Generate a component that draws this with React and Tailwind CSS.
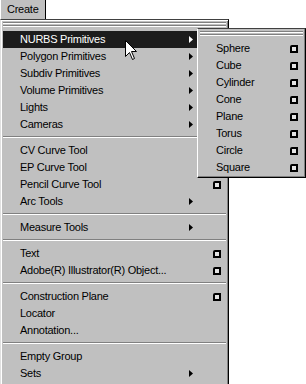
import React from 'react';

const mainItems = [
  { label: 'NURBS Primitives', sub: true, active: true },
  { label: 'Polygon Primitives', sub: true },
  { label: 'Subdiv Primitives', sub: true },
  { label: 'Volume Primitives', sub: true },
  { label: 'Lights', sub: true },
  { label: 'Cameras', sub: true },
  'sep',
  { label: 'CV Curve Tool' },
  { label: 'EP Curve Tool' },
  { label: 'Pencil Curve Tool', opt: true },
  { label: 'Arc Tools', sub: true },
  'sep',
  { label: 'Measure Tools', sub: true },
  'sep',
  { label: 'Text', opt: true },
  { label: 'Adobe(R) Illustrator(R) Object...', opt: true },
  'sep',
  { label: 'Construction Plane', opt: true },
  { label: 'Locator' },
  { label: 'Annotation...' },
  'sep',
  { label: 'Empty Group' },
  { label: 'Sets', sub: true },
];

const nurbs = ['Sphere', 'Cube', 'Cylinder', 'Cone', 'Plane', 'Torus', 'Circle', 'Square'];

function OptBox() {
  return <span className="block w-[8px] h-[8px] border-2 border-black rounded-tl-[2px] bg-[#e4e4e4]" />;
}

function Arrow({ white }) {
  return (
    <svg width="4" height="7" viewBox="0 0 4 7" className="block">
      <polygon points="0,0 4,3.5 0,7" fill={white ? '#fff' : '#000'} />
    </svg>
  );
}

function TearOff() {
  return (
    <div className="h-[11px] mx-[2px] pt-[2px]">
      <div className="border-t border-t-[#808080] border-b border-b-white" />
      <div className="h-[1px]" />
      <div className="border-t border-t-[#808080] border-b border-b-white" />
    </div>
  );
}

function Separator() {
  return (
    <div className="h-[9px] mx-[2px] pt-[3px]">
      <div className="border-t border-t-[#808080] border-b border-b-white" />
    </div>
  );
}

function Row({ item }) {
  return (
    <div
      className={`flex items-center h-[17px] mx-[2px] pl-[17px] pr-[5px] ${
        item.active ? 'bg-[#1c1c1c] text-white' : 'text-black'
      }`}
    >
      <span className="flex-1 whitespace-nowrap">{item.label}</span>
      <span className="w-[24px]">{item.sub && <Arrow white={item.active} />}</span>
      <span className="w-[8px]">{item.opt && <OptBox />}</span>
    </div>
  );
}

export default function App() {
  return (
    <div
      className="relative w-[306px] h-[384px] bg-white overflow-hidden text-[11px] tracking-[-0.25px] leading-none"
      style={{ fontFamily: '"Liberation Sans", Arial, sans-serif' }}
    >
      {/* menu bar */}
      <div className="flex h-[19px]">
        <div className="w-[46px] bg-[#c0c0c0] border-l border-l-white border-r border-r-black flex items-center pl-[6px] text-black">
          Create
        </div>
      </div>

      {/* main menu */}
      <div className="w-[229px] h-[365px] bg-[#c0c0c0] border-t border-t-[#404040] border-l border-l-[#e0e0e0] border-r border-r-black shadow-[inset_1px_1px_0_#fff,inset_-1px_0_0_#808080]">
        <TearOff />
        {mainItems.map((it, i) => (it === 'sep' ? <Separator key={i} /> : <Row key={i} item={it} />))}
      </div>

      {/* NURBS submenu */}
      <div className="absolute left-[197px] top-[28px] w-[109px] bg-[#c0c0c0] border-t border-t-[#404040] border-l border-l-white border-r border-r-black border-b border-b-black shadow-[inset_-1px_-1px_0_#808080]">
        <TearOff />
        {nurbs.map((n) => (
          <div key={n} className="flex items-center h-[17px] mx-[2px] pl-[16px] pr-[5px]">
            <span className="flex-1">{n}</span>
            <OptBox />
          </div>
        ))}
        <div className="h-[1px]" />
      </div>

      {/* mouse cursor */}
      <svg className="absolute left-[125px] top-[40px]" width="13" height="21" viewBox="0 0 13 21">
        <path d="M0.5,0.5 L0.5,16.5 L4.5,12.5 L7.5,19.5 L9.5,18.5 L6.5,11.5 L11.5,11.5 Z" fill="#fff" stroke="#000" strokeWidth="1" />
      </svg>
    </div>
  );
}
